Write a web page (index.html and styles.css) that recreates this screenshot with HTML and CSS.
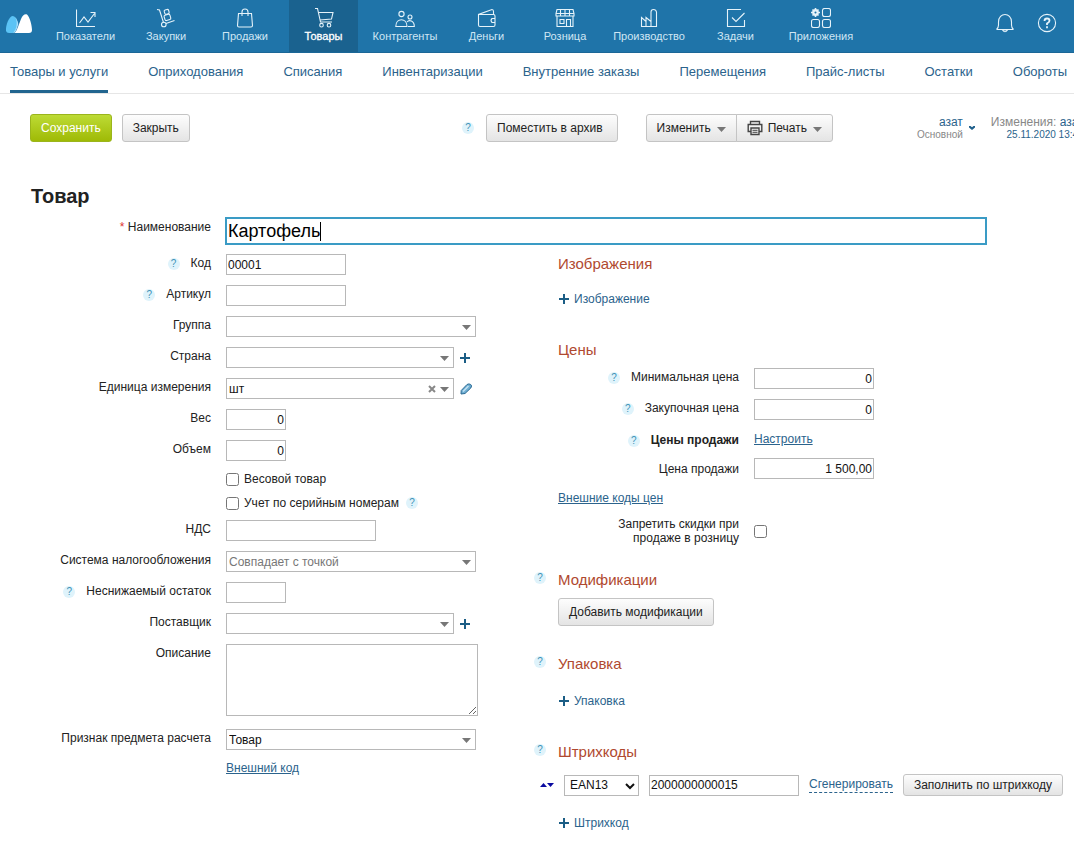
FILE: index.html
```html
<!DOCTYPE html>
<html lang="ru">
<head>
<meta charset="utf-8">
<title>Товар</title>
<link rel="stylesheet" href="styles.css">
</head>
<body>
<svg class="sprite" aria-hidden="true">
  <symbol id="arrow" viewBox="0 0 9 5"><path d="M0 0h9L4.500 5z" fill="#777"/></symbol>
  <symbol id="plus" viewBox="0 0 10 10"><path d="M4 0h2v4h4v2H6v4H4V6H0V4h4z" fill="#1b5d85"/></symbol>
</svg>

<header class="topbar">
  <a class="logo" href="#" aria-label="Главная">
    <svg width="28" height="22" viewBox="0 0 28 22"><path d="M1 18C.5 12 4 3.500 7.500 3C10 3 12 6 13 10L10 19.500Q8 20 4 20Q1.500 20 1 18z" fill="#5bc3f5"/><path d="M9.500 20C12 18 14 11 16 6C17.500 2 20 .5 22 1.500C25 4 27 13 27 17Q27 20 24 20z" fill="#fff"/><path d="M9.500 19.500C12 17 12.500 13.500 13.300 11C12.500 8 11.500 5.500 10 4C13 8 12 16 8 20z" fill="#a9defa"/></svg>
  </a>
  <nav class="modules">
    <a class="module" href="#"><svg class="icon" viewBox="0 0 20 20"><path d="M.5 1.500v17H19M3.500 15l4.500-6 4 5 6.500-8.500M14.500 4.500h4.500v4.500"/></svg>Показатели</a>
    <a class="module" href="#"><svg class="icon" viewBox="0 0 20 20"><path d="M1 1.500l2.500.5 4 12.500M10 15.500l8.500-3"/><circle cx="7.800" cy="16.500" r="2.300"/><rect x="8.300" y="6.800" width="6" height="5.500" rx="1.300" transform="rotate(-17 11 9)"/><rect x="8.500" y="1.500" width="4.500" height="4.500" rx="1.300" transform="rotate(-17 11 4)"/></svg>Закупки</a>
    <a class="module" href="#"><svg class="icon" viewBox="0 0 20 20"><path d="M3.500 5.500h13l1 12q0 1.500-1.500 1.500H4q-1.500 0-1.500-1.500zM7 8V4q0-3 3-3t3 3v4"/></svg>Продажи</a>
    <a class="module module-active" href="#"><svg class="icon" viewBox="0 0 20 20"><path d="M1 .5h2.500L6.500 14H18M4.500 4.500H19L17.500 11 6 12"/><circle cx="7.500" cy="17.200" r="1.800"/><circle cx="15" cy="17.200" r="1.800"/></svg>Товары</a>
    <a class="module" href="#"><svg class="icon" viewBox="0 0 20 20"><circle cx="6.500" cy="6" r="2.600"/><circle cx="15" cy="9" r="2"/><path d="M.8 18.500c0-9 11.200-9 11.200 0zM12 14c2-2.500 7.300-1.500 7.300 4.500H13"/></svg>Контрагенты</a>
    <a class="module" href="#"><svg class="icon" viewBox="0 0 20 20"><path d="M2 6.500h14.500q1.500 0 1.500 1.500v9q0 1.500-1.500 1.500H3q-1.500 0-1.500-1.500V6.500L15 1.500q1.500 0 1.500 2v3M18 10.500h-3q-2 2 0 4h3"/></svg>Деньги</a>
    <a class="module" href="#"><svg class="icon" viewBox="0 0 20 20"><path d="M2 1.500h16l1 4v2.500H1V5.500zM1 5.500h18M5.500 2v6M10 2v6M14.500 2v6M2 8v10.500h16V8M5 11.500h4v4H5zM11.500 18.500v-7h4v7"/></svg>Розница</a>
    <a class="module" href="#"><svg class="icon" viewBox="0 0 20 20"><path d="M2.500 18.500V9.500l4.500 4v-4l5 4V4q0-2.500 2.500-2.500t3 2.500v14.500zM7 13.500v5M12 13v5.500"/></svg>Производство</a>
    <a class="module" href="#"><svg class="icon" viewBox="0 0 20 20"><path d="M15 1.500H1.500v17h17V12M6 9.500l4 4 8.500-8.500"/></svg>Задачи</a>
    <a class="module" href="#"><svg class="icon" viewBox="0 0 20 20"><rect x="11.500" y=".5" width="8" height="8" rx="2"/><rect x=".5" y="11.500" width="8" height="8" rx="2"/><rect x="11.500" y="11.500" width="8" height="8" rx="2"/><circle cx="4.500" cy="4.500" r="2.200" stroke-width="2.400"/><path d="M4.500 0v2M4.500 7v2M0 4.500h2M7 4.500h2M1.500 1.500L3 3M6 6l1.500 1.500M7.500 1.500L6 3M3 6L1.500 7.500" stroke-width="1.600"/></svg>Приложения</a>
  </nav>
  <div class="topbar-tools">
    <a href="#" aria-label="Уведомления"><svg class="icon" viewBox="0 0 20 20"><path d="M1.500 16.500h17M1.500 16.500Q3.500 15 3.500 12V9c0-10 13-10 13 0v3q0 3 2 4.500M7.500 17q2.500 3.500 5 0z"/></svg></a>
    <a href="#" aria-label="Помощь"><svg class="icon" viewBox="0 0 20 20"><circle cx="10" cy="10" r="8.600"/><path d="M7.500 8q0-2.500 2.500-2.500t2.500 2.200Q12.500 9 10 10.500v1.500M10 13.300v2" stroke-width="1.800"/></svg></a>
  </div>
</header>

<nav class="subnav">
  <a class="subnav-active" href="#">Товары и услуги</a>
  <a href="#">Оприходования</a>
  <a href="#">Списания</a>
  <a href="#">Инвентаризации</a>
  <a href="#">Внутренние заказы</a>
  <a href="#">Перемещения</a>
  <a href="#">Прайс-листы</a>
  <a href="#">Остатки</a>
  <a href="#">Обороты</a>
</nav>

<div class="toolbar">
  <div class="toolbar-main">
    <button class="btn btn-save" type="submit" form="product">Сохранить</button>
    <button class="btn" type="button">Закрыть</button>
  </div>
  <div class="toolbar-archive">
    <button class="help" type="button" aria-label="Справка">?</button>
    <button class="btn btn-archive" type="button">Поместить в архив</button>
  </div>
  <div class="btn-group">
    <button class="btn" type="button">Изменить <svg class="arrow"><use href="#arrow"/></svg></button>
    <button class="btn" type="button"><svg class="printer" viewBox="0 0 16 16"><path d="M3.500 4.500V1.500h9v3M3.500 11.500H1.200V4.500h13.600v7H12.500M4 8h8v6.500H4z" fill="none" stroke="#444" stroke-width="1.400"/><path d="M5.500 10.300h5M5.500 12.300h5" stroke="#444"/></svg>Печать <svg class="arrow"><use href="#arrow"/></svg></button>
  </div>
  <div class="owner">
    <div><a href="#">азат</a><small>Основной</small></div>
    <svg class="chevron" viewBox="0 0 6 4"><path d="M0 0h1.500L3 1.300 4.500 0H6v1.500L3 4 0 1.500z" fill="#1f5f8b"/></svg>
  </div>
  <div class="changes">
    <div>Изменения: <a href="#">азат</a></div>
    <small><a href="#">25.11.2020 13:45</a></small>
  </div>
</div>

<form class="product" id="product">
  <h1>Товар</h1>
  <div class="row row-name">
    <div class="label"><label for="name"><span class="required">*</span> Наименование</label></div>
    <div class="name-box"><input class="name-input" id="name" type="text" value="Картофель"><span class="caret"></span></div>
  </div>

  <div class="columns">
    <section class="left">
      <div class="row"><div class="label"><button class="help" type="button" aria-label="Справка">?</button><label for="code">Код</label></div><input class="field w-medium" id="code" type="text" value="00001"></div>
      <div class="row"><div class="label"><button class="help" type="button" aria-label="Справка">?</button><label for="article">Артикул</label></div><input class="field w-medium" id="article" type="text"></div>
      <div class="row"><div class="label"><label for="group">Группа</label></div><div class="combo w-full"><select class="field" id="group"><option></option></select><svg class="arrow"><use href="#arrow"/></svg></div></div>
      <div class="row"><div class="label"><label for="country">Страна</label></div><div class="combo w-combo"><select class="field" id="country"><option></option></select><svg class="arrow"><use href="#arrow"/></svg></div><button class="mini" type="button" aria-label="Добавить страну"><svg class="plus"><use href="#plus"/></svg></button></div>
      <div class="row"><div class="label"><label for="unit">Единица измерения</label></div><div class="combo w-combo"><select class="field" id="unit"><option>шт</option></select><button class="clear" type="button" aria-label="Очистить"><svg width="8" height="8" viewBox="0 0 8 8"><path d="M1 1l6 6M7 1L1 7" stroke="#888" stroke-width="2"/></svg></button><svg class="arrow"><use href="#arrow"/></svg></div><button class="mini" type="button" aria-label="Изменить единицу"><svg width="12" height="12" viewBox="0 0 12 12"><path d="M1 11L1.200 7.500 7 1.500Q9 .3 10.700 1.500T10.800 5L5 10.500z" fill="#6faed2" stroke="#2a6a94"/><path d="M3 8.500L8.500 3" stroke="#c5e3f3" stroke-width="1.400"/></svg></button></div>
      <div class="row"><div class="label"><label for="weight">Вес</label></div><input class="field w-small number" id="weight" type="text" value="0"></div>
      <div class="row"><div class="label"><label for="volume">Объем</label></div><input class="field w-small number" id="volume" type="text" value="0"></div>
      <div class="checks">
        <label class="check"><input type="checkbox">Весовой товар</label>
        <div class="check"><label class="check"><input type="checkbox">Учет по серийным номерам</label><button class="help" type="button" aria-label="Справка">?</button></div>
      </div>
      <div class="row"><div class="label"><label for="vat">НДС</label></div><input class="field w-vat" id="vat" type="text"></div>
      <div class="row"><div class="label"><label for="tax">Система налогообложения</label></div><div class="combo w-full"><select class="field muted" id="tax"><option>Совпадает с точкой</option></select><svg class="arrow"><use href="#arrow"/></svg></div></div>
      <div class="row"><div class="label"><button class="help" type="button" aria-label="Справка">?</button><label for="minimum">Неснижаемый остаток</label></div><input class="field w-small" id="minimum" type="text"></div>
      <div class="row"><div class="label"><label for="supplier">Поставщик</label></div><div class="combo w-combo"><select class="field" id="supplier"><option></option></select><svg class="arrow"><use href="#arrow"/></svg></div><button class="mini" type="button" aria-label="Добавить поставщика"><svg class="plus"><use href="#plus"/></svg></button></div>
      <div class="row row-text"><div class="label"><label for="description">Описание</label></div><textarea class="field" id="description"></textarea></div>
      <div class="row"><div class="label"><label for="kind">Признак предмета расчета</label></div><div class="combo w-full"><select class="field" id="kind"><option>Товар</option></select><svg class="arrow"><use href="#arrow"/></svg></div></div>
      <a class="link external" href="#">Внешний код</a>
    </section>

    <section class="right">
      <h2>Изображения</h2>
      <a class="add add-image" href="#"><svg class="plus"><use href="#plus"/></svg>Изображение</a>

      <h2>Цены</h2>
      <div class="prices">
        <div class="row"><div class="label"><button class="help" type="button" aria-label="Справка">?</button><label for="min-price">Минимальная цена</label></div><input class="field w-medium number" id="min-price" type="text" value="0"></div>
        <div class="row"><div class="label"><button class="help" type="button" aria-label="Справка">?</button><label for="buy-price">Закупочная цена</label></div><input class="field w-medium number" id="buy-price" type="text" value="0"></div>
        <div class="row row-short row-center"><div class="label"><button class="help" type="button" aria-label="Справка">?</button><strong>Цены продажи</strong></div><a class="link" href="#">Настроить</a></div>
        <div class="row row-center"><div class="label"><label for="price">Цена продажи</label></div><input class="field w-medium number" id="price" type="text" value="1 500,00"></div>
        <a class="link price-codes" href="#">Внешние коды цен</a>
        <div class="row row-center"><div class="label label-wrap"><label for="discount">Запретить скидки при продаже в розницу</label></div><input id="discount" type="checkbox"></div>
      </div>

      <div class="heading"><button class="help" type="button" aria-label="Справка">?</button><h2>Модификации</h2></div>
      <button class="btn btn-modify" type="button">Добавить модификации</button>

      <div class="heading"><button class="help" type="button" aria-label="Справка">?</button><h2>Упаковка</h2></div>
      <a class="add" href="#"><svg class="plus"><use href="#plus"/></svg>Упаковка</a>

      <div class="heading"><button class="help" type="button" aria-label="Справка">?</button><h2>Штрихкоды</h2></div>
      <div class="barcode">
        <button class="sort" type="button" aria-label="Порядок"><svg width="14" height="6" viewBox="0 0 14 6"><path d="M0 5h7L3.500 1zM7 1h7L10.500 5z" fill="#0a0aa0"/></svg></button>
        <div class="combo w-type"><select class="field" aria-label="Тип штрихкода"><option>EAN13</option></select><svg class="tick" viewBox="0 0 10 7"><path d="M1 1l4 4 4-4" fill="none" stroke="#111" stroke-width="2"/></svg></div>
        <input class="field w-vat" type="text" aria-label="Штрихкод" value="2000000000015">
        <a class="generate" href="#">Сгенерировать</a>
        <button class="btn btn-low" type="button">Заполнить по штрихкоду</button>
      </div>
      <a class="add add-barcode" href="#"><svg class="plus"><use href="#plus"/></svg>Штрихкод</a>
    </section>
  </div>
</form>
</body>
</html>
```

FILE: styles.css
```css
* { box-sizing: border-box; }

body {
  margin: 0;
  overflow-x: hidden;
  background: #fff;
  color: #222;
  font: 12px/16px "Liberation Sans", Arial, sans-serif;
}

a { color: #2b638c; text-decoration: none; }
button, input, select, textarea { margin: 0; font: inherit; color: inherit; }
button { padding: 0; border: 0; background: none; cursor: pointer; }
svg { display: block; flex: none; }
.sprite { position: absolute; width: 0; height: 0; }

/* Top bar */
.topbar {
  display: flex;
  height: 53px;
  background: #1f74a9;
  border-bottom: 1px solid #1b6797;
}
.logo { width: 40px; padding: 13px 0 0 5px; }
.modules {
  display: grid;
  grid-template-columns: 91px 70px 88px 69px 94px 69px 88px 80px 93px 78px;
}
.module {
  display: flex;
  flex-direction: column;
  align-items: center;
  gap: 1px;
  padding-top: 8px;
  color: #cfe6f4;
  font-size: 11px;
  line-height: 14px;
}
.module-active { background: #1a628f; color: #fff; -webkit-text-stroke: 0.3px #fff; }
.icon {
  width: 20px;
  height: 20px;
  fill: none;
  stroke: #e6f3fa;
  stroke-width: 1.1;
}
.topbar-tools {
  display: flex;
  align-items: center;
  gap: 22px;
  margin-left: auto;
  padding: 0 17px 6px 0;
}

/* Section tabs */
.subnav {
  display: flex;
  gap: 40px;
  height: 41px;
  padding: 0 10px;
  border-bottom: 1px solid #e6e6e6;
  font-size: 13px;
  line-height: 37px;
  white-space: nowrap;
}
.subnav-active { border-bottom: 3px solid #22658f; }

/* Buttons */
.btn {
  display: flex;
  align-items: center;
  height: 28px;
  padding: 0 10px;
  border: 1px solid #c4c4c4;
  border-radius: 3px;
  background: linear-gradient(#fdfdfd, #e4e4e4);
  color: #222;
  white-space: nowrap;
}
.btn-save {
  border-color: #9bb51c;
  background: linear-gradient(#bddb35, #9fba06);
  color: #fff;
}
.btn-archive { padding-right: 14px; }
.btn-low { height: 22px; }
.btn-group { display: flex; margin-left: 28px; }
.btn-group .btn:first-child { border-radius: 3px 0 0 3px; }
.btn-group .btn:last-child { margin-left: -1px; border-radius: 0 3px 3px 0; }
.btn .arrow { margin: 2px 0 0 6px; }
.arrow { width: 9px; height: 5px; }
.plus { width: 10px; height: 10px; }
.printer { width: 16px; height: 16px; margin-right: 5px; }
.help {
  flex: none;
  width: 12px;
  height: 12px;
  border-radius: 50%;
  background: #dff3fb;
  color: #3f93b8;
  font-size: 10px;
  line-height: 12px;
  text-align: center;
}

/* Toolbar */
.toolbar {
  display: flex;
  align-items: center;
  padding: 20px 0 0 30px;
  overflow: hidden;
  white-space: nowrap;
}
.toolbar-main { display: flex; flex: none; gap: 10px; width: 432px; }
.toolbar-archive { display: flex; align-items: center; gap: 12px; }
.owner { display: flex; align-items: center; gap: 6px; margin-left: 84px; text-align: right; }
.owner, .changes { color: #888; line-height: 13px; }
.owner a, .owner small { display: block; }
.chevron { width: 6px; height: 4px; }
.changes { margin-left: 16px; text-align: right; }
.changes small, .owner small { font-size: 10px; line-height: 11px; }
.changes small { display: block; }

/* Form */
h1 { margin: 42px 0 10px 31px; font-size: 20px; line-height: 24px; }
.row { display: flex; min-height: 21px; margin-bottom: 10px; }
.row-center { align-items: center; }
.label {
  display: flex;
  flex: none;
  justify-content: flex-end;
  gap: 11px;
  width: 211px;
  margin-right: 15px;
  padding-top: 1px;
  white-space: nowrap;
}
.label .help { margin-top: 3px; }
.required { color: #d33; }
.row-name { padding-right: 88px; }
.name-box { position: relative; flex: 1; }
.name-input {
  display: block;
  width: 100%;
  height: 26px;
  padding: 0 1px;
  border: 1px solid #3a9bc5;
  outline: 1px solid #3a9bc5;
  color: #000;
  font-size: 18px;
}
.caret { position: absolute; top: 4px; left: 94px; width: 1px; height: 19px; background: #000; }

.columns { display: grid; grid-template-columns: 478px 1fr; gap: 56px; }
.field {
  height: 21px;
  padding: 0 1px;
  border: 1px solid #b8b8b8;
  border-radius: 0;
  background: #fff;
  color: #111;
}
select.field { width: 100%; padding: 0 2px; appearance: none; display: block; }
textarea.field { width: 252px; height: 72px; display: block; }
select.muted { color: #777; }
.number { text-align: right; }
.w-small { width: 60px; }
.w-medium { width: 120px; }
.w-vat { width: 150px; }
.w-combo { width: 228px; }
.w-full { width: 250px; }
.w-type { width: 75px; }
.combo { position: relative; }
.combo .arrow { position: absolute; top: 9px; right: 5px; }
.combo .clear { position: absolute; top: 7px; right: 18px; }
.combo .tick { position: absolute; top: 8px; right: 4px; width: 10px; height: 7px; }
.w-type select.field { padding-left: 5px; }
.mini { margin-left: 6px; }
.row-text { margin-bottom: 13px; }
.link { text-decoration: underline; }
.external { display: block; margin: 8px 0 0 226px; }

.checks { display: flex; flex-direction: column; gap: 8px; margin: 0 0 9px 226px; }
.check { display: flex; align-items: center; }
input[type="checkbox"] { width: 13px; height: 13px; }
.check input { margin-right: 5px; }
.check .help { margin-left: 7px; }

/* Right column */
.right { padding-left: 24px; }
h2 { margin: 0; color: #b0492f; font-size: 15px; font-weight: normal; line-height: 20px; }
.add { display: flex; align-items: center; gap: 5px; margin: 19px 0 33px 1px; }
.add-image { margin-top: 17px; }
.prices { margin: 8px 0 25px; }
.prices .label { width: 181px; }
.prices .label-wrap { white-space: normal; text-align: right; line-height: 14px; padding: 0 0 0 50px; }
.row-short { min-height: 18px; }
.price-codes { display: block; margin: 11px 0; }
.heading { display: flex; gap: 12px; margin-left: -24px; }
.heading .help { margin-top: 2px; }
.btn-modify { margin: 8px 0 28px; }
.barcode { display: flex; align-items: center; gap: 10px; margin: 12px 0 16px -18px; white-space: nowrap; }
.generate { border-bottom: 1px dashed #2b638c; line-height: 15px; }
.add-barcode { margin-bottom: 0; }
```
